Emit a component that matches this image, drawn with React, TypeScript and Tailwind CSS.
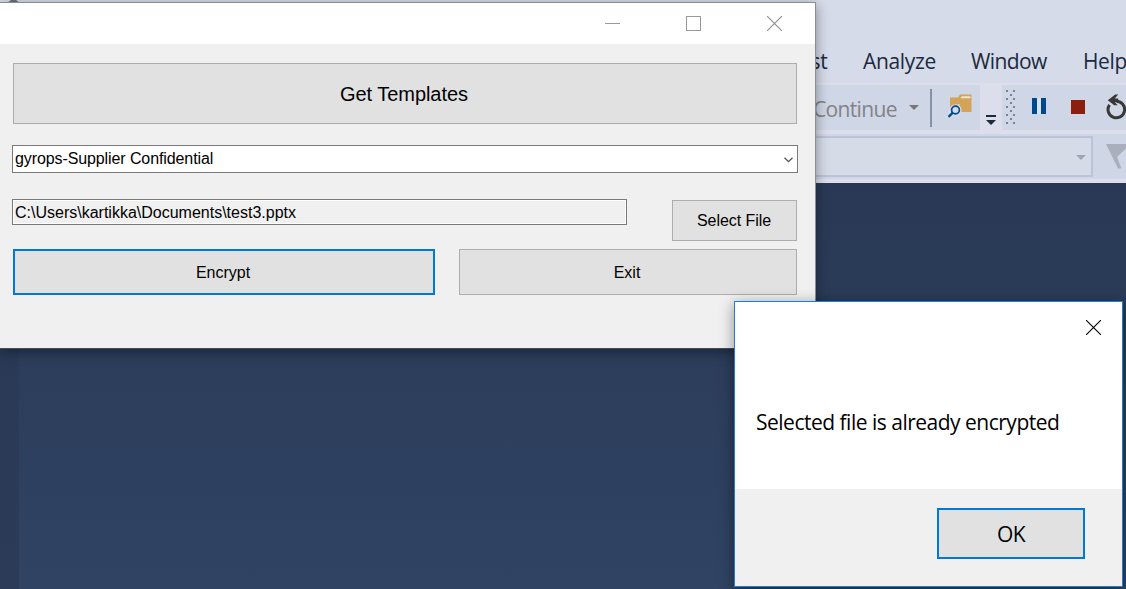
import type { ReactNode } from "react";

const ui = "font-['Open_Sans','Noto_Sans',sans-serif]";
const form = "font-['Liberation_Sans',Arial,sans-serif]";

function MenuItem({ children, className }: { children: ReactNode; className: string }) {
  return <span className={`block shrink-0 whitespace-nowrap ${className}`}>{children}</span>;
}

function Grip() {
  const dots = [];
  for (let row = 0; row < 9; row++) {
    const y = row * 4;
    if (row % 2 === 0) {
      dots.push([0, y], [7, y]);
    } else {
      dots.push([4, y]);
    }
  }
  return (
    <svg width="10" height="36" viewBox="0 0 10 36" shapeRendering="crispEdges" className="shrink-0">
      {dots.map(([x, y]) => (
        <rect key={`${x}-${y}`} x={x} y={y} width="2" height="2" fill="#76829b" />
      ))}
    </svg>
  );
}

function FindInFiles() {
  return (
    <svg width="26" height="26" viewBox="0 0 26 26" className="shrink-0">
      <path d="M2 3.5h8l2-3h11.5v17.5h-12V10H2z" fill="#d3a457" />
      <path d="M2 4h8v13H2z" fill="#d3a457" />
      <path d="M12.5 4.2l1.2-2h8.8v2z" fill="#eee4d3" />
      <circle cx="7.5" cy="16.3" r="6.1" fill="#d6dbe9" />
      <path d="M0 23l5-5" stroke="#d6dbe9" strokeWidth="5" />
      <circle cx="7.5" cy="16" r="3.9" fill="#d5dbe8" stroke="#00498a" strokeWidth="1.7" />
      <path d="M4.8 18.7L.5 23" stroke="#00498a" strokeWidth="2.4" />
    </svg>
  );
}

function Restart() {
  return (
    <svg width="20" height="26" viewBox="0 0 20 26" className="shrink-0">
      <path d="M3.5 10.8A8.3 8.3 0 1 0 10.5 7.2" fill="none" stroke="#383838" strokeWidth="3" />
      <path d="M1.8 6.2L9.2 .4h3L8.8 4.6h3.4v3.6H8.8l3 3H8.2z" fill="#383838" />
    </svg>
  );
}

function Cross({ color }: { color: string }) {
  return (
    <svg width="15" height="15" viewBox="0 0 15 15" className="shrink-0">
      <path d="M0 0l15 15M15 0L0 15" stroke={color} strokeWidth="1.1" fill="none" />
    </svg>
  );
}

function Ide() {
  return (
    <div className={`flex h-[589px] w-[1126px] flex-col bg-[#d6dbe9] ${ui}`}>
      <div className="flex h-[83px] shrink-0 items-start overflow-hidden pt-[46px] text-[21px] leading-[30px] text-[#1b293e]">
        <MenuItem className="ml-[788px] w-[75px] tracking-[-0.4px]">Test</MenuItem>
        <MenuItem className="w-[108px] tracking-[-0.35px]">Analyze</MenuItem>
        <MenuItem className="w-[112px] tracking-[-0.6px]">Window</MenuItem>
        <MenuItem className="tracking-[-0.4px]">Help</MenuItem>
      </div>
      <div className="h-[2px] shrink-0 bg-[#dcdfeb]" />
      <div className="flex h-[45px] shrink-0 overflow-hidden bg-[#dcdfeb]">
        <div className="flex w-[980px] shrink-0 items-start bg-[#cfd6e5] pl-[813px]">
          <span className="mt-[9px] w-[96px] shrink-0 text-[21px] leading-[30px] tracking-[-0.65px] text-[#838387]">
            Continue
          </span>
          <svg width="10" height="5" viewBox="0 0 10 5" className="mt-[20px] shrink-0">
            <path d="M0 0h10L5 5z" fill="#77777b" />
          </svg>
          <div className="mt-1 ml-[11px] h-[38px] w-[2px] shrink-0 bg-[#8591a5]" />
          <div className="mt-[9px] ml-[16px]">
            <FindInFiles />
          </div>
        </div>
        <svg width="22" height="45" viewBox="0 0 22 45" className="shrink-0">
          <path d="M6 30h10v2H6zM6 35h10l-5 5z" fill="#1b293e" />
        </svg>
        <div className="flex flex-1 items-start overflow-hidden bg-[#cfd6e5] pl-1">
          <div className="mt-[5px]">
            <Grip />
          </div>
          <div className="mt-[13px] ml-[16px] flex h-[16px] shrink-0 gap-1 bg-[#d9e1ed]">
            <div className="w-[5px] bg-[#00498a]" />
            <div className="w-[5px] bg-[#00498a]" />
          </div>
          <div className="mt-[15px] ml-[25px] h-[14px] w-[14px] shrink-0 bg-[#8b1e0c]" />
          <div className="mt-[9px] ml-[21px]">
            <Restart />
          </div>
        </div>
      </div>
      <div className="h-1 shrink-0 bg-[#dcdfeb]" />
      <div className="flex h-[45px] shrink-0 items-start overflow-hidden bg-[#cfd6e5] pt-[2px]">
        <div className="flex h-[41px] w-[1093px] shrink-0 items-center justify-end border-2 border-[#bac3d7] bg-[#d5dce8] pr-[5px]">
          <svg width="10" height="5" viewBox="0 0 10 5" className="mt-[2px]">
            <path d="M0 0h10L5 5z" fill="#9ba7b7" />
          </svg>
        </div>
        <svg width="20" height="26" viewBox="0 0 20 26" className="mt-[8px] ml-[13px] shrink-0">
          <path d="M0 0h20v4.5L11 13l4.5 11.5H12z" fill="#a9afbd" />
        </svg>
      </div>
      <div className="h-1 shrink-0 bg-[#dcdfeb]" />
      <div className="flex flex-1 bg-[#293955]">
        <div className="w-[19px] bg-linear-to-b from-[#293955] to-[#2b3b58]" />
        <div className="flex-1 bg-linear-to-b from-[#293955] to-[#304363]" />
      </div>
    </div>
  );
}

function FormWindow() {
  return (
    <div
      className={`absolute top-[2px] left-0 flex h-[347px] w-[816px] flex-col border-t border-r border-b border-[#8a8d94] border-b-[#454b58] bg-[#f0f0f0] text-[16px] text-black shadow-[0_3px_12px_rgba(0,0,0,0.4)] ${form}`}
    >
      <div className="flex h-[41px] shrink-0 items-center justify-end bg-white pr-[33px]">
        <div className="h-px w-[15px] bg-[#999999]" />
        <div className="ml-[66px] h-[15px] w-[15px] border border-[#999999]" />
        <div className="ml-[66px]">
          <Cross color="#8e8e8e" />
        </div>
      </div>
      <div className="flex flex-col pt-[19px] pr-[17px] pl-3">
        <button className="ml-px flex h-[61px] w-[784px] items-center justify-center border border-[#adadad] bg-[#e1e1e1] pr-[2px] text-[20px] tracking-[-0.05px]">
          Get Templates
        </button>
        <div className="mt-[21px] flex h-[28px] w-[786px] items-center justify-between border border-[#7a7a7a] bg-white pr-1 pl-[2px]">
          <span className="tracking-[-0.1px]">gyrops-Supplier Confidential</span>
          <svg width="9" height="6" viewBox="0 0 9 6" className="mt-[2px]">
            <path d="M.5.7l4 4 4-4" fill="none" stroke="#555" strokeWidth="1.3" />
          </svg>
        </div>
        <div className="mt-[26px] flex items-start justify-between">
          <div className="flex h-[26px] w-[615px] items-center border border-[#7a7a7a] bg-[#f0f0f0] pt-[2px] pl-[2px] shadow-[inset_0_0_0_1px_#fff]">
            <span>C:\Users\kartikka\Documents\test3.pptx</span>
          </div>
          <button className="mt-px mr-px flex h-[41px] w-[125px] items-center justify-center border border-[#adadad] bg-[#e1e1e1] pr-px tracking-[-0.05px]">
            Select File
          </button>
        </div>
        <div className="mt-2 mr-px ml-px flex justify-between">
          <button className="flex h-[46px] w-[422px] items-center justify-center border-2 border-[#0078d7] bg-[#e1e1e1] pt-[2px] pr-[2px]">
            Encrypt
          </button>
          <button className="flex h-[46px] w-[338px] items-center justify-center border border-[#adadad] bg-[#e1e1e1] pt-[2px] pr-[2px]">
            Exit
          </button>
        </div>
      </div>
    </div>
  );
}

function MessageDialog() {
  return (
    <div
      className={`absolute top-[301px] left-[734px] flex h-[286px] w-[389px] flex-col border border-[#1a80d3] bg-white text-[21px] text-black shadow-[0_3px_14px_rgba(0,0,0,0.4)] ${ui}`}
    >
      <div className="flex h-[51px] shrink-0 items-center justify-end pr-[21px]">
        <Cross color="#000000" />
      </div>
      <div className="flex flex-1 items-start pt-[54px] pl-[21px]">
        <span className="leading-[30px] tracking-[-0.5px] whitespace-nowrap">Selected file is already encrypted</span>
      </div>
      <div className="flex h-[97px] shrink-0 items-start justify-end bg-[#f0f0f0] pt-[19px] pr-[37px]">
        <button className="flex h-[51px] w-[148px] items-center justify-center border-2 border-[#0078d7] bg-[#e1e1e1] pt-[2px] tracking-[-0.5px]">
          OK
        </button>
      </div>
    </div>
  );
}

export default function App() {
  return (
    <div className="relative h-[589px] w-[1126px] overflow-hidden">
      <Ide />
      <svg width="14" height="3" viewBox="0 0 14 3" className="absolute top-0 left-[7px]">
        <path d="M0 3L4 0h5l4 3z" fill="#6d7078" />
      </svg>
      <FormWindow />
      <MessageDialog />
    </div>
  );
}
